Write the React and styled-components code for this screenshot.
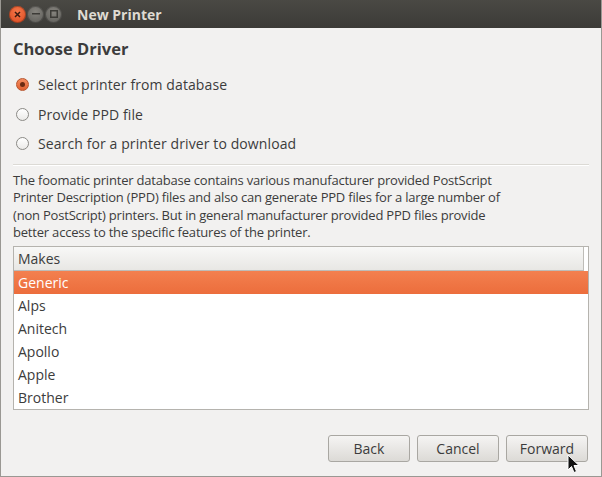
import React from "react"
import styled, { createGlobalStyle } from "styled-components"

const GlobalStyle = createGlobalStyle`
  html, body {
    margin: 0;
    padding: 0;
    background: #f2f1f0;
  }
  body {
    font-family: "Open Sans", "Noto Sans", sans-serif;
  }
`

const Window = styled.div`
  width: 602px;
  height: 477px;
  box-sizing: border-box;
  display: flex;
  flex-direction: column;
  background: #f2f1f0;
  border-left: 1px solid #9a9893;
  border-right: 1px solid #9a9893;
  border-bottom: 1px solid #9a9893;
  position: relative;
  overflow: hidden;
  color: #3c3c3c;
`

const TitleBar = styled.div`
  height: 28px;
  flex: none;
  display: flex;
  align-items: center;
  padding-left: 9px;
  background: linear-gradient(#4a4944, #3c3b37);
  margin: 0 -1px;
`

const WinButton = styled.div`
  width: 17px;
  height: 17px;
  border-radius: 50%;
  margin-right: 1px;
  display: flex;
  align-items: center;
  justify-content: center;
  background: ${p =>
    p.$close
      ? "radial-gradient(circle at 50% 35%, #f5784a, #d8461d)"
      : "radial-gradient(circle at 50% 35%, #86847e, #5a5955)"};
  box-shadow: inset 0 0 0 1px rgba(0, 0, 0, 0.25);
`

const Title = styled.div`
  margin-left: 14px;
  font-weight: 700;
  font-size: 14px;
  color: #dfdbd2;
`

const Body = styled.div`
  flex: 1;
  display: flex;
  flex-direction: column;
  padding: 10px 12px 0 12px;
`

const Heading = styled.h1`
  margin: 0;
  font-size: 16.5px;
  font-weight: 700;
  color: #3c3c3c;
  line-height: 22px;
`

const Options = styled.div`
  display: flex;
  flex-direction: column;
  margin-top: 10px;
  padding-left: 3px;
`

const Option = styled.label`
  height: 29.5px;
  display: flex;
  align-items: center;
  gap: 9px;
  font-size: 14px;
  letter-spacing: 0.1px;
`

const Radio = styled.span`
  width: 13px;
  height: 13px;
  border-radius: 50%;
  box-sizing: border-box;
  display: flex;
  align-items: center;
  justify-content: center;
  border: 1px solid ${p => (p.$on ? "#b8542c" : "#8b8a86")};
  background: ${p =>
    p.$on ? "linear-gradient(#f58d60, #e0602f)" : "linear-gradient(#ffffff, #ebeae8)"};
  &::after {
    content: "";
    display: ${p => (p.$on ? "block" : "none")};
    width: 5px;
    height: 5px;
    border-radius: 50%;
    background: #6b2a10;
  }
`

const Separator = styled.hr`
  border: none;
  border-top: 1px solid #dcdad5;
  border-bottom: 1px solid #ffffff;
  margin: 5px 0 6px 0;
`

const Description = styled.p`
  margin: 0;
  font-size: 13px;
  letter-spacing: -0.2px;
  line-height: 17.5px;
`

const ListFrame = styled.div`
  margin-top: 4px;
  border: 1px solid #b5b3ae;
  background: #ffffff;
  display: flex;
  flex-direction: column;
  height: 164px;
  box-sizing: border-box;
`

const ListHeader = styled.div`
  height: 23px;
  display: flex;
  align-items: center;
  padding-left: 4px;
  margin-right: 4px;
  font-size: 14px;
  background: linear-gradient(#f8f8f7, #e8e7e4);
  border-bottom: 1px solid #bebcb7;
  border-right: 1px solid #bebcb7;
`

const Row = styled.div`
  height: 23px;
  display: flex;
  align-items: center;
  padding-left: 4px;
  font-size: 14px;
  color: ${p => (p.$selected ? "#ffffff" : "#3c3c3c")};
  background: ${p => (p.$selected ? "linear-gradient(#f3804f, #ec6d3c)" : "transparent")};
`

const Footer = styled.div`
  margin-top: auto;
  display: flex;
  justify-content: flex-end;
  gap: 7px;
  padding: 0 1px 14px 0;
`

const Button = styled.button`
  width: 82px;
  height: 27px;
  border: 1px solid #a9a7a2;
  border-radius: 3px;
  background: linear-gradient(#f5f4f3, #dcdad6);
  font-family: inherit;
  font-size: 14px;
  color: #3c3c3c;
  padding: 0;
`

const Cursor = styled.svg`
  position: absolute;
  left: 566px;
  top: 454px;
`

const makes = ["Generic", "Alps", "Anitech", "Apollo", "Apple", "Brother"]

const App = () => {
  return (
    <>
      <GlobalStyle />
      <Window>
        <TitleBar>
          <WinButton $close>
            <svg width="7" height="7" viewBox="0 0 7 7">
              <path d="M1 1L6 6M6 1L1 6" stroke="#3a1a10" strokeWidth="1.5" />
            </svg>
          </WinButton>
          <WinButton>
            <svg width="8" height="2" viewBox="0 0 8 2">
              <rect width="8" height="1.5" fill="#3c3b37" />
            </svg>
          </WinButton>
          <WinButton>
            <svg width="8" height="8" viewBox="0 0 8 8">
              <rect x="0.75" y="0.75" width="6.5" height="6.5" fill="none" stroke="#3c3b37" strokeWidth="1.5" />
            </svg>
          </WinButton>
          <Title>New Printer</Title>
        </TitleBar>
        <Body>
          <Heading>Choose Driver</Heading>
          <Options>
            <Option>
              <Radio $on />
              Select printer from database
            </Option>
            <Option>
              <Radio />
              Provide PPD file
            </Option>
            <Option>
              <Radio />
              Search for a printer driver to download
            </Option>
          </Options>
          <Separator />
          <Description>
            The foomatic printer database contains various manufacturer provided PostScript
            <br />
            Printer Description (PPD) files and also can generate PPD files for a large number of
            <br />
            (non PostScript) printers. But in general manufacturer provided PPD files provide
            <br />
            better access to the specific features of the printer.
          </Description>
          <ListFrame>
            <ListHeader>Makes</ListHeader>
            {makes.map((m, i) => (
              <Row key={m} $selected={i === 0}>
                {m}
              </Row>
            ))}
          </ListFrame>
          <Footer>
            <Button>Back</Button>
            <Button>Cancel</Button>
            <Button>Forward</Button>
          </Footer>
        </Body>
        <Cursor width="14" height="21" viewBox="0 0 14 21">
          <path d="M1 1L1 16L4.5 12.5L7 18.5L9.5 17.5L7 11.5L12 11.5Z" fill="#111" stroke="#fff" strokeWidth="1" />
        </Cursor>
      </Window>
    </>
  )
}

export default App
